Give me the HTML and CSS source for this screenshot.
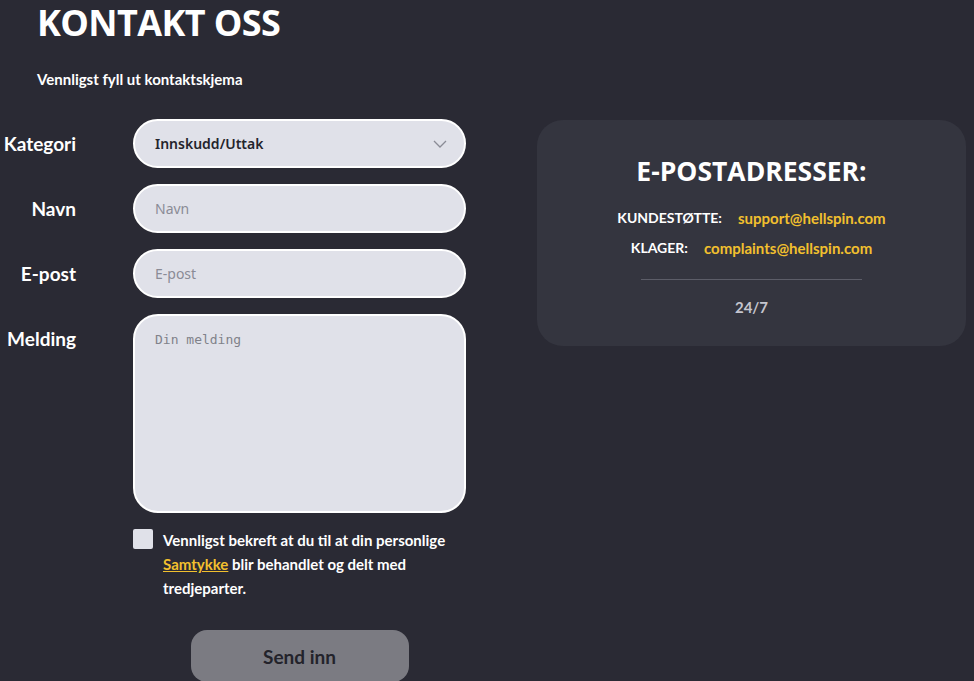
FILE: index.html
```html
<!DOCTYPE html>
<html lang="no">
<head>
<meta charset="utf-8">
<title>Kontakt oss</title>
<link rel="stylesheet" href="styles.css">
</head>
<body>
<div class="page">
  <header class="head">
    <h1 class="title">KONTAKT OSS</h1>
    <p class="subtitle">Vennligst fyll ut kontaktskjema</p>
  </header>
  <div class="main">
    <form class="form">
      <label class="label">Kategori</label>
      <div class="select">
        <span class="select-value">Innskudd/Uttak</span>
        <svg class="chevron" width="14" height="8" viewBox="0 0 14 8"><path d="M1 1l6 6 6-6" fill="none" stroke="#8a8b96" stroke-width="1.3"/></svg>
      </div>
      <label class="label">Navn</label>
      <input class="input" type="text" placeholder="Navn">
      <label class="label">E-post</label>
      <input class="input" type="text" placeholder="E-post">
      <label class="label">Melding</label>
      <textarea class="textarea" placeholder="Din melding"></textarea>
      <div class="spacer"></div>
      <div class="consent">
        <span class="checkbox"></span>
        <p class="consent-text">Vennligst bekreft at du til at din personlige <a class="link" href="#">Samtykke</a> blir behandlet og delt med tredjeparter.</p>
      </div>
      <div class="spacer"></div>
      <div class="submit-row"><button type="button" class="submit">Send inn</button></div>
    </form>
    <aside class="card">
      <h2 class="card-title">E-POSTADRESSER:</h2>
      <div class="mail-row"><span class="mail-label">KUNDESTØTTE:</span><span class="mail">support@hellspin.com</span></div>
      <div class="mail-row"><span class="mail-label">KLAGER:</span><span class="mail">complaints@hellspin.com</span></div>
      <div class="divider"></div>
      <div class="hours">24/7</div>
    </aside>
  </div>
</div>
</body>
</html>
```
FILE: styles.css
```css
* { box-sizing: border-box; }
html, body { margin: 0; padding: 0; }
body {
  background: #2a2a34;
  color: #ffffff;
  font-family: "Lato", "Noto Sans", sans-serif;
  height: 681px;
  overflow: hidden;
}
.head { padding-left: 37px; }
.title {
  margin: 0;
  padding-top: 3px;
  font-family: "Open Sans", sans-serif;
  font-weight: 700;
  font-size: 36px;
  line-height: 40px;
  letter-spacing: -0.6px;
}
.subtitle {
  margin: 26px 0 0;
  font-size: 15px;
  font-weight: 700;
  line-height: 20px;
}
.main {
  display: flex;
  align-items: flex-start;
  gap: 71px;
  margin-top: 30px;
}
.form {
  display: grid;
  grid-template-columns: 76px 333px;
  column-gap: 57px;
  row-gap: 16px;
}
.label {
  text-align: right;
  font-size: 19px;
  font-weight: 700;
  line-height: 49px;
  height: 49px;
  white-space: nowrap;
}
.select, .input, .textarea {
  background: #e0e1e9;
  border: 2px solid #ffffff;
  border-radius: 25px;
  font-family: "Noto Sans", sans-serif;
  font-size: 14px;
  color: #22222a;
}
.select {
  height: 49px;
  display: flex;
  align-items: center;
  justify-content: space-between;
  padding: 0 17px 0 20px;
}
.select-value { font-weight: 600; color: #24242c; }
.input {
  height: 49px;
  padding: 0 20px;
  outline: none;
}
.input::placeholder { color: #8a8b96; }
.textarea {
  height: 199px;
  resize: none;
  padding: 16px 20px;
  font-family: "DejaVu Sans Mono", monospace;
  font-size: 13px;
  outline: none;
}
.textarea::placeholder { color: #80818a; }
.spacer { height: 1px; }
.consent {
  display: flex;
  gap: 10px;
}
.checkbox {
  flex: none;
  width: 20px;
  height: 20px;
  background: #e0e1e9;
  border-radius: 2px;
}
.consent-text {
  margin: -1px 0 0;
  font-size: 15px;
  font-weight: 700;
  line-height: 24px;
}
.link { color: #f2c02e; text-decoration: underline; text-underline-offset: 1px; }
.submit-row { display: flex; justify-content: center; padding-top: 14px; }
.submit {
  width: 218px;
  height: 52px;
  background: #7b7b82;
  border: none;
  border-radius: 16px;
  color: #23232b;
  font-family: "Lato", sans-serif;
  font-weight: 700;
  font-size: 19px;
}
.card {
  width: 429px;
  margin-top: 1px;
  background: #34353f;
  border-radius: 26px;
  padding: 33px 20px 25px;
  text-align: center;
}
.card-title {
  margin: 0 0 14px;
  font-family: "Open Sans", sans-serif;
  font-size: 26.5px;
  font-weight: 700;
  line-height: 36px;
}
.mail-row {
  display: flex;
  justify-content: center;
  gap: 16px;
  font-size: 14px;
  font-weight: 700;
  line-height: 30px;
}
.mail-label { color: #ffffff; }
.mail { color: #f2c02e; font-size: 15px; }
.divider {
  width: 221px;
  height: 1px;
  background: #5c5d68;
  margin: 16px auto 13px;
}
.hours {
  color: #c4c5ce;
  font-size: 15px;
  font-weight: 700;
  line-height: 28px;
}
```
